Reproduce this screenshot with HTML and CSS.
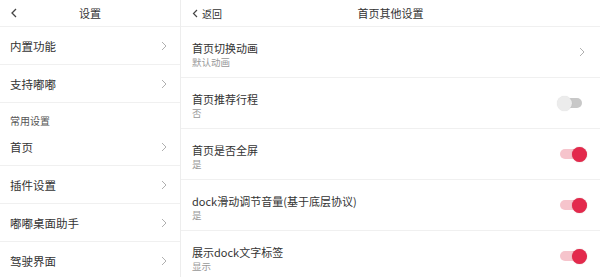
FILE: index.html
```html
<!DOCTYPE html>
<html lang="zh">
<head>
<meta charset="utf-8">
<link rel="stylesheet" href="styles.css">
</head>
<body>
<div class="app">
  <aside class="side">
    <header class="side-head">
      <svg class="back" width="6" height="10" viewBox="0 0 6 10"><polyline points="5,1 1,5 5,9" fill="none" stroke="#444" stroke-width="1.3"/></svg>
      <span class="side-title">设置</span>
    </header>
    <div class="s-row"><span>内置功能</span><svg class="chev" width="6" height="10" viewBox="0 0 6 10"><polyline points="1,1 5,5 1,9" fill="none" stroke="#b0b0b0" stroke-width="1"/></svg></div>
    <div class="s-row"><span>支持嘟嘟</span><svg class="chev" width="6" height="10" viewBox="0 0 6 10"><polyline points="1,1 5,5 1,9" fill="none" stroke="#b0b0b0" stroke-width="1"/></svg></div>
    <div class="s-label">常用设置</div>
    <div class="s-row"><span>首页</span><svg class="chev" width="6" height="10" viewBox="0 0 6 10"><polyline points="1,1 5,5 1,9" fill="none" stroke="#b0b0b0" stroke-width="1"/></svg></div>
    <div class="s-row"><span>插件设置</span><svg class="chev" width="6" height="10" viewBox="0 0 6 10"><polyline points="1,1 5,5 1,9" fill="none" stroke="#b0b0b0" stroke-width="1"/></svg></div>
    <div class="s-row"><span>嘟嘟桌面助手</span><svg class="chev" width="6" height="10" viewBox="0 0 6 10"><polyline points="1,1 5,5 1,9" fill="none" stroke="#b0b0b0" stroke-width="1"/></svg></div>
    <div class="s-row"><span>驾驶界面</span><svg class="chev" width="6" height="10" viewBox="0 0 6 10"><polyline points="1,1 5,5 1,9" fill="none" stroke="#b0b0b0" stroke-width="1"/></svg></div>
  </aside>
  <main class="main">
    <header class="main-head">
      <div class="back-btn">
        <svg width="6" height="9" viewBox="0 0 6 9"><polyline points="5,1 1.5,4.5 5,8" fill="none" stroke="#444" stroke-width="1.2"/></svg>
        <span>返回</span>
      </div>
      <span class="main-title">首页其他设置</span>
    </header>
    <div class="m-row">
      <div class="m-text"><div class="m-title">首页切换动画</div><div class="m-sub">默认动画</div></div>
      <svg class="chev-r" width="6" height="10" viewBox="0 0 6 10"><polyline points="1,1 5,5 1,9" fill="none" stroke="#b0b0b0" stroke-width="1"/></svg>
    </div>
    <div class="m-row">
      <div class="m-text"><div class="m-title">首页推荐行程</div><div class="m-sub">否</div></div>
      <div class="toggle"><span class="track"></span><span class="knob"></span></div>
    </div>
    <div class="m-row">
      <div class="m-text"><div class="m-title">首页是否全屏</div><div class="m-sub">是</div></div>
      <div class="toggle on"><span class="track"></span><span class="knob"></span></div>
    </div>
    <div class="m-row">
      <div class="m-text"><div class="m-title">dock滑动调节音量(基于底层协议)</div><div class="m-sub">是</div></div>
      <div class="toggle on"><span class="track"></span><span class="knob"></span></div>
    </div>
    <div class="m-row">
      <div class="m-text"><div class="m-title">展示dock文字标签</div><div class="m-sub">显示</div></div>
      <div class="toggle on"><span class="track"></span><span class="knob"></span></div>
    </div>
  </main>
</div>
</body>
</html>
```
FILE: styles.css
```css
* { box-sizing: border-box; margin: 0; padding: 0; }
html, body { width: 600px; height: 277px; overflow: hidden; background: #fff; }
body {
  font-family: "Noto Sans CJK SC", "Noto Sans", sans-serif;
  color: #333;
}
.app { display: flex; height: 277px; }

.side {
  width: 181px;
  flex: none;
  border-right: 1px solid #ededed;
  display: flex;
  flex-direction: column;
}
.side-head {
  height: 27px;
  flex: none;
  border-bottom: 1px solid #f0f0f0;
  display: flex;
  align-items: center;
  position: relative;
  padding-left: 11px;
}
.side-title {
  position: absolute;
  left: 0; right: 0;
  text-align: center;
  font-size: 11px;
  color: #333;
}
.s-row {
  height: 38px;
  flex: none;
  border-bottom: 1px solid #f0f0f0;
  display: flex;
  align-items: center;
  justify-content: space-between;
  padding: 0 13px 0 10px;
  font-size: 11.5px;
  color: #333;
}
.s-label {
  height: 25px;
  flex: none;
  font-size: 10px;
  color: #555;
  padding: 11px 0 0 10px;
  line-height: 14px;
}

.main { flex: 1; display: flex; flex-direction: column; }
.main-head {
  height: 27px;
  flex: none;
  border-bottom: 1px solid #f0f0f0;
  display: flex;
  align-items: center;
  position: relative;
  padding-left: 11px;
}
.back-btn {
  display: flex;
  align-items: center;
  gap: 4px;
  font-size: 10px;
  color: #333;
  position: relative;
  z-index: 1;
}
.main-title {
  position: absolute;
  left: 0; right: 0;
  text-align: center;
  font-size: 11px;
  color: #333;
}
.m-row {
  height: 51px;
  flex: none;
  border-bottom: 1px solid #f0f0f0;
  display: flex;
  align-items: center;
  justify-content: space-between;
  padding: 0 13px 0 11px;
}
.m-text { align-self: flex-start; margin-top: 13px; }
.m-title { font-size: 11px; line-height: 16px; color: #333; }
.m-sub { font-size: 9.5px; line-height: 13px; color: #999; }
.chev-r { margin-right: 2px; }

.toggle {
  position: relative;
  width: 30px;
  height: 15px;
}
.toggle .track {
  position: absolute;
  left: 3px; right: 5px;
  top: 2.5px;
  height: 10px;
  border-radius: 5px;
  background: #c8c8c8;
}
.toggle .knob {
  position: absolute;
  left: 0;
  top: 0;
  width: 15px;
  height: 15px;
  border-radius: 50%;
  background: #ececec;
  box-shadow: 0 0 1px rgba(0,0,0,0.15);
}
.toggle.on .track { background: #f6c4cc; }
.toggle.on .knob {
  left: 15px;
  background: #e3294c;
  box-shadow: 0 0 1px rgba(150,0,20,0.5);
}
```
